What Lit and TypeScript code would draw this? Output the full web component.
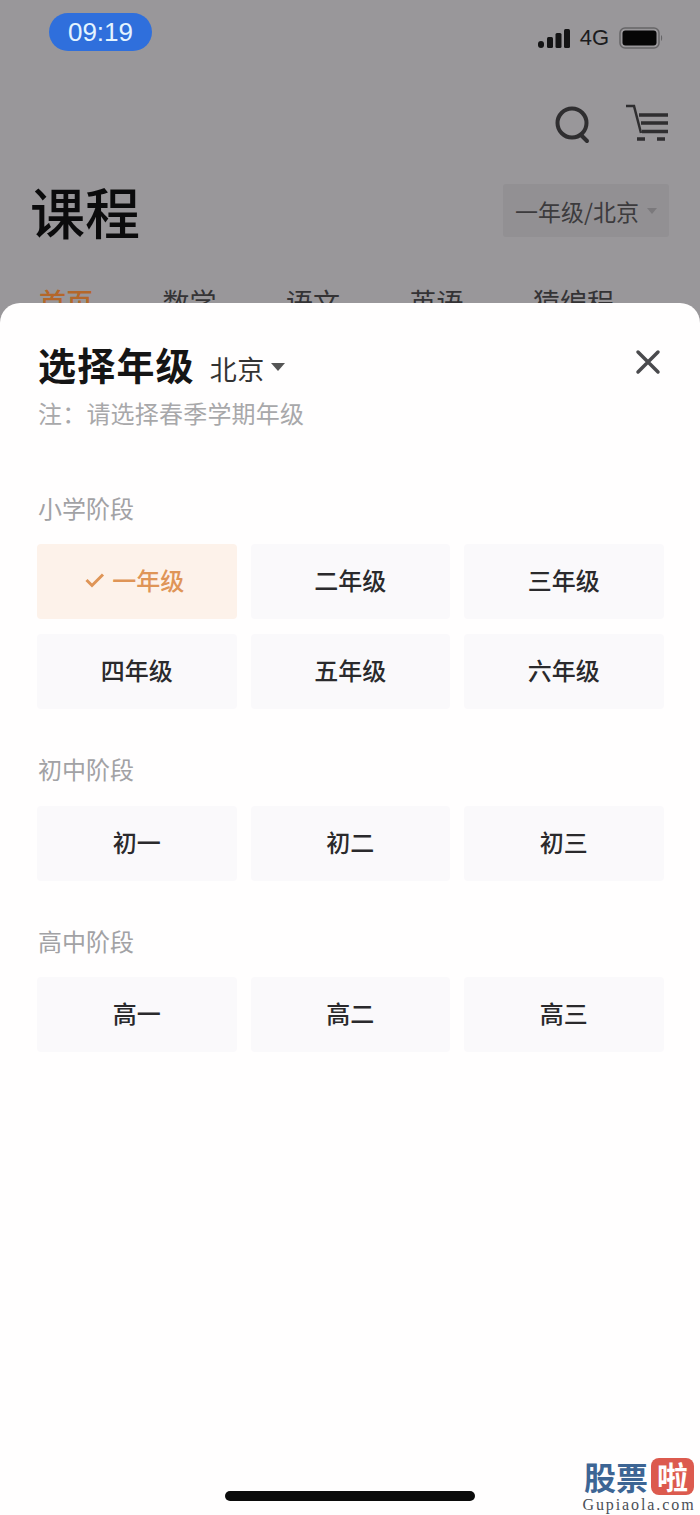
import { LitElement, html, css } from "lit";
import { customElement } from "lit/decorators.js";

const sections = [
  { title: "小学阶段", items: ["一年级", "二年级", "三年级", "四年级", "五年级", "六年级"], cls: "first" },
  { title: "初中阶段", items: ["初一", "初二", "初三"], cls: "second" },
  { title: "高中阶段", items: ["高一", "高二", "高三"], cls: "third" },
];

@customElement("app-root")
export class AppRoot extends LitElement {
  static styles = css`
    :host {
      display: flex;
      flex-direction: column;
      width: 700px;
      height: 1515px;
      overflow: hidden;
      background: #99979a;
      font-family: "Noto Sans CJK SC", "Liberation Sans", sans-serif;
      position: relative;
    }
    .back { height: 303px; flex: none; overflow: hidden; padding: 13px 31px 0 49px; box-sizing: border-box; }
    .status { display: flex; justify-content: space-between; align-items: center; height: 38px; }
    .time {
      width: 103px; height: 38px; border-radius: 19px; background: #2f6fdc; color: #e4f4ff;
      display: flex; align-items: center; justify-content: center;
      font: 400 26px "Liberation Sans", sans-serif;
    }
    .status-right { display: flex; align-items: center; gap: 10px; margin: 12px 6px 0 0; }
    .net { font: 400 22px "Liberation Sans", sans-serif; color: #1c1c1e; }
    .actions { display: flex; justify-content: flex-end; gap: 34px; margin-top: 52px; height: 40px; align-items: center; }
    .search { margin-top: 3px; display: block; }
    .head { display: flex; justify-content: space-between; align-items: center; margin: 41px 0 0 -18px; height: 53px; }
    .page-title { font-size: 55px; font-weight: 500; color: #0b0b0c; line-height: 53px; margin-left: -1px; }
    .grade-pill {
      width: 166px; height: 53px; background: #929093; color: #3c3b3d; font-size: 23px;
      display: flex; align-items: center; justify-content: center; gap: 8px; border-radius: 3px;
    }
    .mini-caret { width: 0; height: 0; border: 5px solid transparent; border-top: 6px solid #7b797c; border-bottom: 0; }
    .tabs { display: flex; gap: 69.500px; margin: 47px 0 0 -10px; font-size: 27px; line-height: 36px; color: #343335; }
    .tabs .on { color: #b4672a; font-weight: 500; }
    .sheet {
      flex: 1; background: #fffefe; border-radius: 20px 20px 0 0;
      padding: 36px 37px 0 38px; display: flex; flex-direction: column; position: relative;
    }
    .sheet-head { display: flex; align-items: center; height: 50px; }
    .sheet-title { font-size: 38px; font-weight: 700; color: #151515; line-height: 50px; letter-spacing: 1.200px; }
    .city { font-size: 27px; letter-spacing: 0.500px; color: #333; margin-left: 15px; margin-top: 8px; }
    .caret { width: 0; height: 0; margin: 5px 0 0 6px; border: 7.500px solid transparent; border-top: 8px solid #555; border-bottom: 0; }
    .close { margin-left: auto; margin-right: 1px; margin-top: -4px; display: block; }
    .note { font-size: 24px; color: #a8a8aa; line-height: 34px; margin-top: 7px; letter-spacing: 0.200px; }
    .sec-title { font-size: 24px; color: #a2a2a5; line-height: 30px; }
    .sec.first { margin-top: 63px; }
    .sec.second { margin-top: 45px; }
    .sec.third { margin-top: 45px; }
    .grid { display: grid; grid-template-columns: repeat(3, 199.500px); gap: 15px 14px; margin: 21px 0 0 -1px; }
    .sec.second .grid { margin-top: 22px; }
    .cell {
      height: 75px; box-sizing: border-box; padding-bottom: 4px; background: #faf9fb; border-radius: 4px; color: #2a2a2c; font-size: 24px; font-weight: 500;
      display: flex; align-items: center; justify-content: center; gap: 7px;
    }
    .cell.on { background: #fdf2ea; color: #df9557; padding-right: 4px; }
    .home { position: absolute; left: 225px; bottom: 14px; width: 250px; height: 10px; border-radius: 5px; background: #0b0b0b; }
    .mark { position: absolute; right: 5px; bottom: 2px; width: 112px; display: flex; flex-direction: column; align-items: center; }
    .mark-top { display: flex; align-items: center; gap: 3px; height: 38px; margin-bottom: 1px; }
    .mark-blue { font: 700 32px/36px "Noto Sans CJK SC", sans-serif; color: #3d6594; }
    .mark-red {
      width: 43px; height: 37px; background: #dc5a4e; border-radius: 8px; color: #fff;
      font: 700 31px/36px "Noto Sans CJK SC", sans-serif; text-align: center;
    }
    .mark-url { font: 400 16px/17px "Liberation Serif", serif; color: #4a4f57; letter-spacing: 1.900px; white-space: nowrap; }
  `;

  private signal() {
    return html`<svg width="32" height="19" viewBox="0 0 32 19" fill="#141415">
      <rect x="0" y="12" width="6" height="7" rx="3"/><rect x="9" y="8" width="6" height="11" rx="1.500"/>
      <rect x="17.500" y="4" width="6" height="15" rx="1.500"/><rect x="26" y="0" width="6" height="19" rx="1.500"/>
    </svg>`;
  }

  private battery() {
    return html`<svg width="44" height="22" viewBox="0 0 44 22">
      <rect x="1" y="1" width="39" height="20" rx="5" fill="none" stroke="#666567" stroke-width="1.500"/>
      <rect x="3.500" y="3.500" width="34" height="15" rx="3" fill="#060606"/>
      <path d="M42 8c1.500.5 1.500 5.500 0 6z" fill="#666567"/>
    </svg>`;
  }

  private search() {
    return html`<svg class="search" width="36" height="38" viewBox="0 0 36 38" fill="none" stroke="#2f2e30" stroke-width="4">
      <circle cx="17" cy="17" r="14.500"/><path d="M26 29l6 6" stroke-linecap="round"/>
    </svg>`;
  }

  private cart() {
    return html`<svg width="44" height="38" viewBox="0 0 44 38" fill="none" stroke="#2f2e30">
      <path d="M1 2h8l7 27" stroke-width="2.500"/>
      <path d="M14 11h29M16 19h27M17 27.500h26" stroke-width="3.500"/>
      <path d="M12 35h8M32 35h8" stroke-width="3.500"/>
    </svg>`;
  }

  private closeIcon() {
    return html`<svg class="close" width="28" height="28" viewBox="0 0 28 28" fill="none" stroke="#4a4a4d" stroke-width="3.500" stroke-linecap="round">
      <path d="M4 4l20 20M24 4L4 24"/>
    </svg>`;
  }

  private check() {
    return html`<svg width="20" height="16" viewBox="0 0 20 16" fill="none" stroke="#df9557" stroke-width="3">
      <path d="M1.500 8l5.500 5.500L18 2.500"/>
    </svg>`;
  }

  render() {
    return html`
      <div class="back">
        <div class="status">
          <div class="time">09:19</div>
          <div class="status-right">${this.signal()}<span class="net">4G</span>${this.battery()}</div>
        </div>
        <div class="actions">${this.search()}${this.cart()}</div>
        <div class="head">
          <div class="page-title">课程</div>
          <div class="grade-pill">一年级/北京<span class="mini-caret"></span></div>
        </div>
        <div class="tabs">
          <span class="on">首页</span><span>数学</span><span>语文</span><span>英语</span><span>猿编程</span>
        </div>
      </div>
      <div class="sheet">
        <div class="sheet-head">
          <span class="sheet-title">选择年级</span>
          <span class="city">北京</span><span class="caret"></span>
          ${this.closeIcon()}
        </div>
        <div class="note">注：请选择春季学期年级</div>
        ${sections.map(
          (s) => html`<div class="sec ${s.cls}">
            <div class="sec-title">${s.title}</div>
            <div class="grid">
              ${s.items.map(
                (g) => html`<div class="cell ${g === "一年级" ? "on" : ""}">${g === "一年级" ? this.check() : ""}${g}</div>`
              )}
            </div>
          </div>`
        )}
        <div class="home"></div>
        <div class="mark">
          <div class="mark-top"><span class="mark-blue">股票</span><span class="mark-red">啦</span></div>
          <div class="mark-url">Gupiaola.com</div>
        </div>
      </div>
    `;
  }
}
